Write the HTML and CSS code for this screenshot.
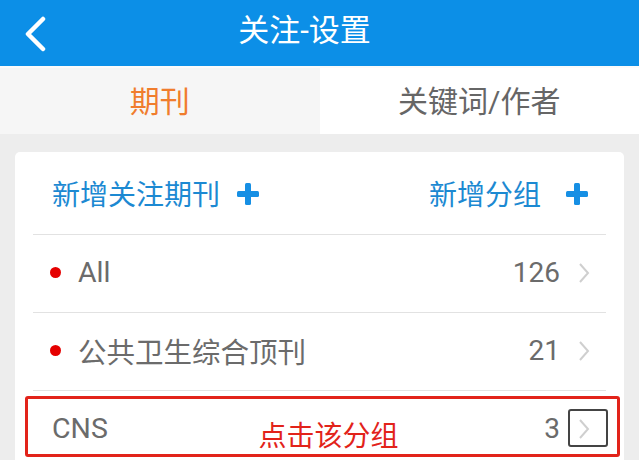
FILE: index.html
```html
<!DOCTYPE html>
<html lang="zh-CN">
<head>
<meta charset="utf-8">
<title>关注-设置</title>
<link rel="stylesheet" href="styles.css">
</head>
<body>
<header class="topbar">
  <div class="back">
    <svg width="24" height="36" viewBox="0 0 24 36"><path d="M20 3 L5 18 L20 33" fill="none" stroke="#fff" stroke-width="4.5" stroke-linecap="round" stroke-linejoin="round"/></svg>
  </div>
  <h1 class="title">关注-设置</h1>
  <div class="spacer"></div>
</header>
<nav class="tabs">
  <div class="tab active">期刊</div>
  <div class="tab">关键词/作者</div>
</nav>
<main class="card">
  <div class="card-head">
    <div class="action">新增关注期刊<span class="plus plus-a"></span></div>
    <div class="action">新增分组<span class="plus plus-b"></span></div>
  </div>
  <div class="row">
    <span class="dot"></span><span class="label">All</span>
    <span class="count">126</span>
    <span class="chev"><svg width="12" height="22" viewBox="0 0 12 22"><path d="M2 2 L10 11 L2 20" fill="none" stroke="#cfcfcf" stroke-width="2"/></svg></span>
  </div>
  <div class="row">
    <span class="dot"></span><span class="label">公共卫生综合顶刊</span>
    <span class="count">21</span>
    <span class="chev"><svg width="12" height="22" viewBox="0 0 12 22"><path d="M2 2 L10 11 L2 20" fill="none" stroke="#cfcfcf" stroke-width="2"/></svg></span>
  </div>
  <div class="row row-plain">
    <span class="label">CNS</span>
    <span class="count">3</span>
    <span class="chev"><svg width="12" height="22" viewBox="0 0 12 22"><path d="M2 2 L10 11 L2 20" fill="none" stroke="#cfcfcf" stroke-width="2"/></svg></span>
    <div class="mark-box"><span class="mark-text">点击该分组</span></div>
    <div class="mark-chev"></div>
  </div>
</main>
</body>
</html>
```

FILE: styles.css
```css
* { box-sizing: border-box; }
html, body { margin: 0; padding: 0; }
body {
  width: 639px;
  height: 460px;
  overflow: hidden;
  background: #ededed;
  font-family: Roboto, "Noto Sans CJK SC", "Noto Sans", sans-serif;
  color: #666;
}
.topbar {
  height: 66px;
  background: #0c8fe7;
  display: grid;
  grid-template-columns: 70px 1fr 100px;
  align-items: center;
}
.back {
  display: flex;
  align-items: center;
  padding-left: 23px;
  padding-top: 2px;
}
.title {
  margin: 0;
  text-align: center;
  color: #fff;
  font-size: 31px;
  font-weight: 400;
  line-height: 1;
  padding-bottom: 6px;
}
.tabs {
  display: flex;
  height: 68px;
  border-top: 2px solid #fbfbfb;
}
.tab {
  flex: 1;
  display: flex;
  align-items: center;
  justify-content: center;
  font-size: 30px;
  color: #666;
  background: #fff;
  padding-bottom: 4px;
}
.tab.active {
  background: #f6f6f6;
  color: #f07d2d;
}
.card {
  margin: 18px 15px 0;
  background: #fff;
  border-radius: 5px;
  padding: 0 18px;
  height: 320px;
}
.card-head {
  height: 82px;
  display: flex;
  align-items: center;
  justify-content: space-between;
  padding: 0 18px 0 19px;
}
.action {
  display: flex;
  align-items: center;
  font-size: 28px;
  color: #1c89d2;
}
.plus {
  position: relative;
  display: inline-block;
  width: 22px;
  height: 22px;
  margin-top: 2px;
}
.plus::before, .plus::after {
  content: "";
  position: absolute;
  background: #168fe4;
  border-radius: 1.5px;
}
.plus::before { left: 0; right: 0; top: 8px; height: 6px; }
.plus::after { top: 0; bottom: 0; left: 8px; width: 6px; }
.plus-a { margin-left: 17px; }
.plus-b { margin-left: 25px; }
.row {
  position: relative;
  height: 78px;
  border-top: 1px solid #e2e2e2;
  display: flex;
  align-items: center;
  padding: 0 16px 2px 17px;
  font-size: 28px;
}
.row-plain { padding-left: 19px; }
.dot {
  width: 11px;
  height: 11px;
  border-radius: 50%;
  background: #e50000;
  margin-right: 17px;
}
.label { color: #6b6b6b; flex: 1; }
.row .label { font-size: 28.5px; }
.count { color: #6b6b6b; }
.chev {
  display: flex;
  align-items: center;
  margin-left: 18px;
}
.mark-box {
  position: absolute;
  left: -8px;
  right: -14px;
  top: 5px;
  height: 61px;
  border: 3px solid #e2231a;
  border-radius: 3px;
  display: flex;
  justify-content: center;
  padding-top: 24px;
}
.mark-text {
  color: #e2231a;
  font-size: 28px;
  line-height: 1;
  margin-left: 12px;
}
.mark-chev {
  position: absolute;
  left: 535px;
  top: 18px;
  width: 40px;
  height: 38px;
  border: 2.5px solid #444;
  border-radius: 3px;
}
```
